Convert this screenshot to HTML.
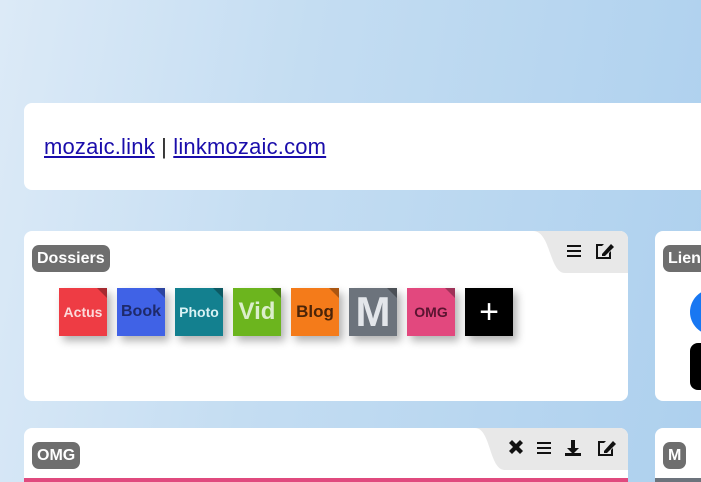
<!DOCTYPE html>
<html style="width:701px;height:482px;overflow:hidden"><head><meta charset="utf-8"><style>
*{margin:0;padding:0;box-sizing:border-box}
body{width:701px;height:482px;overflow:hidden;position:relative;font-family:"Liberation Sans",sans-serif;background:linear-gradient(100deg,#dceaf7 0%,#c4ddf2 40%,#add0ee 100%)}
.card{position:absolute;background:#fff;border-radius:8px;overflow:hidden}
.badge{position:absolute;background:#6e6e6e;color:#fff;font-weight:bold;font-size:16px;border-radius:7px;height:27px;line-height:27px;padding:0 5px}
.ic{position:absolute;width:48px;height:48px;box-shadow:4px 5px 8px rgba(0,0,0,.3);font-weight:bold;text-align:center;line-height:48px;overflow:hidden}
.ic:after{content:"";position:absolute;right:0;top:0;border-style:solid;border-width:0 10px 10px 0;border-color:transparent rgba(0,0,0,.3) transparent transparent}
.tab{position:absolute;top:0;right:0}
a{color:#1a0dab}
</style></head><body>
<div class="card" style="left:24px;top:103px;width:677px;height:87px;border-radius:8px 0 0 8px">
<div style="position:absolute;left:20px;top:31px;font-size:22px;color:#222;letter-spacing:0.18px"><a href="#">mozaic.link</a> | <a href="#">linkmozaic.com</a></div>
</div>

<div class="card" style="left:24px;top:231px;width:604px;height:170px">
<svg class="tab" width="95" height="42"><path d="M0 0 H95 V42 H32 C16 42 18 0 0 0Z" fill="#e8e8e8"/>
<g fill="#111"><rect x="34" y="14" width="14" height="2"/><rect x="34" y="19" width="14" height="2"/><rect x="34" y="24" width="14" height="2"/>
<path d="M63 13h8l-2 2h-4v11h11v-4l2-2v8h-15z"/><path d="M69 23l9-10 3 3-9 9h-3z"/></g></svg>
<div class="badge" style="left:8px;top:14px">Dossiers</div>
<div class="ic" style="left:35px;top:57px;background:#ee3c44;color:#fbdada;font-size:14px">Actus</div>
<div class="ic" style="left:93px;top:57px;background:#4062e6;color:#1e2a6a;font-size:16px">Book</div>
<div class="ic" style="left:151px;top:57px;background:#13808f;color:#d8f2f4;font-size:14px">Photo</div>
<div class="ic" style="left:209px;top:57px;background:#6cb51e;color:#dbeecb;font-size:24px">Vid</div>
<div class="ic" style="left:267px;top:57px;background:#f47b1a;color:#4a2408;font-size:17px">Blog</div>
<div class="ic" style="left:325px;top:57px;background:#6c737c;color:#e3e6ea;font-size:42px">M</div>
<div class="ic" style="left:383px;top:57px;background:#e2487e;color:#5a1430;font-size:14px">OMG</div>
<div class="ic" style="left:441px;top:57px;background:#000;color:#fff;font-size:34px;font-weight:normal">+</div>
</div>

<div class="card" style="left:655px;top:231px;width:46px;height:170px;border-radius:8px 0 0 8px">
<div class="badge" style="left:8px;top:14px">Liens</div>
<div style="position:absolute;left:35px;top:58px;width:46px;height:46px;border-radius:50%;background:#1877f2"></div>
<div style="position:absolute;left:35px;top:112px;width:46px;height:47px;border-radius:8px;background:#000"></div>
</div>

<div class="card" style="left:24px;top:428px;width:604px;height:54px;border-radius:8px 8px 0 0">
<svg class="tab" width="153" height="42"><path d="M0 0 H153 V42 H30 C14 42 16 0 0 0Z" fill="#e8e8e8"/>
<g fill="#111"><path d="M34 15l3-3 4 4 4-4 3 3-4 4 4 4-3 3-4-4-4 4-3-3 4-4z"/>
<rect x="62" y="14" width="14" height="2"/><rect x="62" y="19" width="14" height="2"/><rect x="62" y="24" width="14" height="2"/>
<path d="M96 12h4v8h4l-6 6-6-6h4z"/><rect x="90" y="25" width="16" height="3"/>
<path d="M123 13h8l-2 2h-4v11h11v-4l2-2v8h-15z"/><path d="M129 23l9-10 3 3-9 9h-3z"/></g></svg>
<div class="badge" style="left:8px;top:14px">OMG</div>
<div style="position:absolute;left:0;top:50px;width:604px;height:4px;background:#e04a7e"></div>
</div>

<div class="card" style="left:655px;top:428px;width:46px;height:54px;border-radius:8px 0 0 0">
<div class="badge" style="left:8px;top:14px">M</div>
<div style="position:absolute;left:0;top:50px;width:46px;height:4px;background:#6c737c"></div>
</div>
</body></html>
